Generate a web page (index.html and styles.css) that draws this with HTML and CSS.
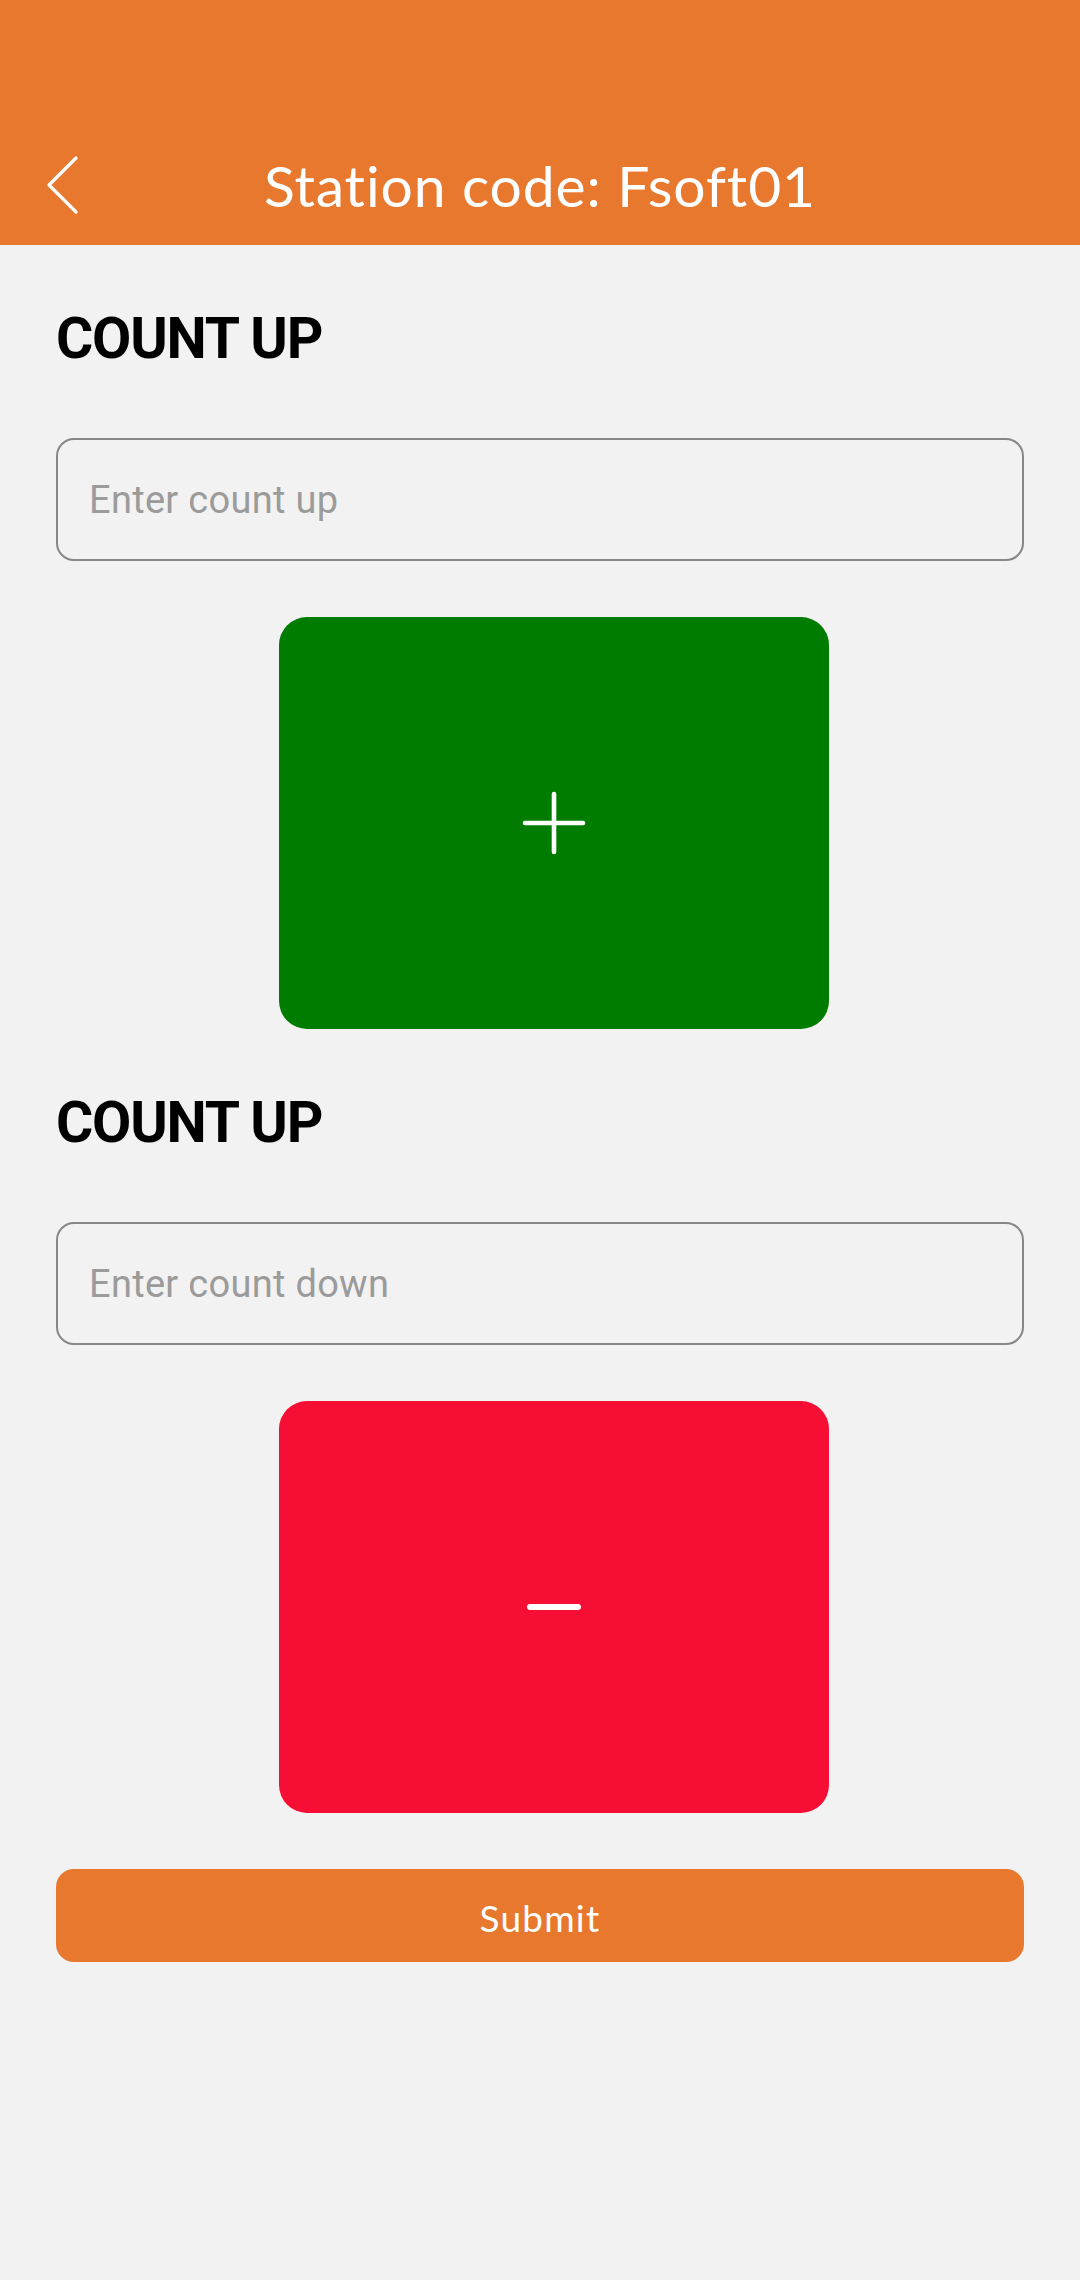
FILE: index.html
```html
<!DOCTYPE html>
<html>
<head>
<meta charset="utf-8">
<link rel="stylesheet" href="styles.css">
</head>
<body>
<header class="appbar">
  <button class="back" aria-label="Back">
    <svg width="34" height="60" viewBox="0 0 34 60"><polyline points="30,3 3,30 30,57" fill="none" stroke="#fff" stroke-width="3.2" stroke-linecap="round" stroke-linejoin="round"/></svg>
  </button>
  <h1 class="title">Station code: Fsoft01</h1>
  <span></span>
</header>
<main class="content">
  <section class="counter">
    <h2 class="label">COUNT UP</h2>
    <input class="field" type="text" placeholder="Enter count up">
    <button class="pad pad-up" aria-label="Increase">
      <svg width="64" height="64" viewBox="0 0 64 64"><path d="M32 3V61M3 32H61" stroke="#fff" stroke-width="4.6" stroke-linecap="round" fill="none"/></svg>
    </button>
  </section>
  <section class="counter">
    <h2 class="label">COUNT UP</h2>
    <input class="field" type="text" placeholder="Enter count down">
    <button class="pad pad-down" aria-label="Decrease">
      <svg width="54" height="8" viewBox="0 0 54 8"><path d="M3 4H51" stroke="#fff" stroke-width="6" stroke-linecap="round" fill="none"/></svg>
    </button>
  </section>
  <button class="submit">Submit</button>
</main>
</body>
</html>
```
FILE: styles.css
```css
* { box-sizing: border-box; }
html, body { margin: 0; padding: 0; }
body {
  width: 1080px;
  height: 2280px;
  background: #f2f2f2;
  font-family: Roboto, "Liberation Sans", sans-serif;
  overflow: hidden;
}
.appbar {
  height: 245px;
  background: #e8782e;
  display: grid;
  grid-template-columns: 1fr auto 1fr;
  align-items: center;
  padding-top: 125px;
}
.back {
  justify-self: start;
  margin-left: 46px;
  background: none;
  border: 0;
  padding: 0;
  display: flex;
}
.title {
  margin: 0;
  font-family: Lato, "Open Sans", sans-serif;
  font-weight: 400;
  font-size: 57px;
  line-height: 57px;
  letter-spacing: 0.9px;
  color: #fff;
  white-space: nowrap;
}
.content {
  padding: 0 56px;
  display: flex;
  flex-direction: column;
}
.counter {
  display: flex;
  flex-direction: column;
}
.label {
  margin: 65px 0 0;
  font-family: Roboto, "Liberation Sans", sans-serif;
  font-weight: 700;
  font-size: 57px;
  line-height: 58px;
  letter-spacing: -1.2px;
  color: #000;
}
.field {
  margin-top: 70px;
  width: 968px;
  height: 123px;
  border: 2px solid #878787;
  border-radius: 18px;
  background: transparent;
  padding: 0 0 0 31px;
  font-family: Roboto, "Liberation Sans", sans-serif;
  font-size: 38px;
  letter-spacing: 0.3px;
  color: #333;
  outline: none;
}
.field::placeholder { color: #9b9b9b; }
.pad {
  margin: 56px 0 0 223px;
  width: 550px;
  height: 412px;
  border: 0;
  border-radius: 28px;
  display: flex;
  align-items: center;
  justify-content: center;
  padding: 0;
}
.pad-up { background: #007d00; }
.pad-down { background: #f70e34; }
.submit {
  margin-top: 56px;
  width: 968px;
  height: 93px;
  border: 0;
  border-radius: 18px;
  background: #e8782e;
  color: #fff;
  font-family: Lato, "Open Sans", sans-serif;
  font-weight: 400;
  font-size: 37px;
  letter-spacing: 1.2px;
  padding-top: 4px;
}
```
